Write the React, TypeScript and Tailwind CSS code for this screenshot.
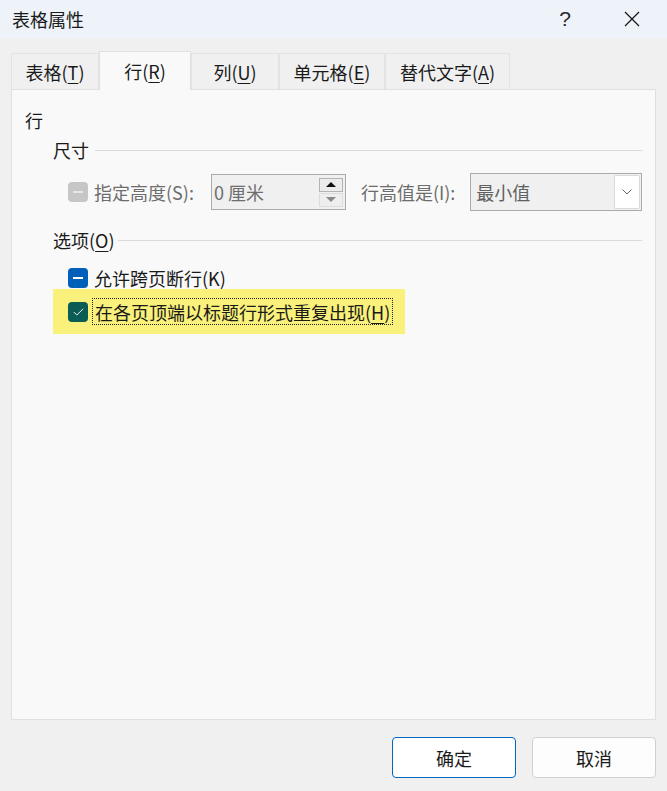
import React from 'react';

const Mn: React.FC<{ c: string }> = ({ c }) => (
  <span className="underline underline-offset-[3px] decoration-1">{c}</span>
);

const tabs = [
  { label: '表格', key: 'T', w: 'w-[88px]' },
  { label: '行', key: 'R', w: 'w-[92px]', active: true },
  { label: '列', key: 'U', w: 'w-[88px]' },
  { label: '单元格', key: 'E', w: 'w-[106px]' },
  { label: '替代文字', key: 'A', w: 'w-[125px]' },
];

const SectionTitle: React.FC<{ children: React.ReactNode; gap: string }> = ({ children, gap }) => (
  <div className={`flex items-center ${gap} pl-[41px] pr-[13px]`}>
    <span className="text-[#1a1a1a]">{children}</span>
    <div className="flex-1 h-px bg-[#dadada]" />
  </div>
);

export default function App() {
  return (
    <div className="w-[667px] h-[791px] bg-[#f0f0f0] flex flex-col text-[18px] leading-[24px] text-[#1a1a1a] font-['Noto_Sans_CJK_SC',sans-serif] overflow-hidden">
      {/* Title bar */}
      <div className="h-[38px] bg-[#eef3f9] flex items-center pl-[12px] shrink-0">
        <span className="text-[#1a1a1a]">表格属性</span>
        <div className="ml-auto flex items-center">
          <span className="text-[21px] text-[#2a2a2a] font-['Liberation_Sans',sans-serif] mr-[53px]">?</span>
          <svg width="16" height="16" viewBox="0 0 16 16" className="mr-[27px]">
            <path d="M1 1L15 15M15 1L1 15" stroke="#1a1a1a" strokeWidth="1.3" />
          </svg>
        </div>
      </div>

      {/* Tabs */}
      <div className="flex items-end pl-[11px] pt-[13px] shrink-0 relative z-10">
        {tabs.map((t) =>
          t.active ? (
            <div
              key={t.key}
              className={`${t.w} h-[39px] -mb-px bg-[#f9f9f9] border border-b-0 border-[#e0e0e0] flex items-center justify-center`}
            >
              {t.label}(<Mn c={t.key} />)
            </div>
          ) : (
            <div
              key={t.key}
              className={`${t.w} h-[36px] bg-[#f0f0f0] border border-b-0 border-[#e3e3e3] flex items-center justify-center`}
            >
              {t.label}(<Mn c={t.key} />)
            </div>
          )
        )}
      </div>

      {/* Panel */}
      <div className="mx-[11px] flex-1 bg-[#f9f9f9] border border-[#e0e0e0] flex flex-col">
        <div className="pl-[13px] pt-[18px]">行</div>

        <div className="mt-[6px]">
          <SectionTitle gap="gap-[6px]">尺寸</SectionTitle>
        </div>

        <div className="mt-[11px] flex items-center h-[38px] pl-[56px]">
          <div className="w-[20px] h-[20px] rounded-[4px] bg-[#c6c6c6] flex items-center justify-center">
            <div className="w-[10px] h-[2px] bg-[#e6e6e6]" />
          </div>
          <span className="ml-[6px] text-[#6d6d6d]">指定高度(S):</span>
          <div className="ml-[17px] w-[135px] h-[36px] bg-[#f0f0f0] border border-[#ababab] flex items-center pl-[2px] pr-[2px]">
            <span className="text-[#6d6d6d] flex-1">0 厘米</span>
            <div className="flex flex-col w-[24px] gap-px">
              <div className="h-[14px] bg-[#ececec] border border-[#b4b4b4] flex items-center justify-center">
                <svg width="10" height="5" viewBox="0 0 10 5"><path d="M0 5L5 0L10 5Z" fill="#111" /></svg>
              </div>
              <div className="h-[14px] bg-[#eeeeee] border border-[#dcdcdc] flex items-center justify-center">
                <svg width="10" height="5" viewBox="0 0 10 5"><path d="M0 0L10 0L5 5Z" fill="#8a8a8a" /></svg>
              </div>
            </div>
          </div>
          <span className="ml-[15px] text-[#6d6d6d]">行高值是(I):</span>
          <div className="ml-[15px] w-[172px] h-[38px] bg-[#f0f0f0] border border-[#ababab] flex items-center pl-[5px] pr-[1px]">
            <span className="text-[#606060] flex-1">最小值</span>
            <div className="w-[26px] h-[34px] bg-white border border-[#dadada] rounded-[2px] flex items-center justify-center">
              <svg width="10" height="6" viewBox="0 0 10 6"><path d="M0.5 0.5L5 5L9.5 0.5" stroke="#666" fill="none" strokeWidth="1" /></svg>
            </div>
          </div>
        </div>

        <div className="mt-[17px]">
          <SectionTitle gap="gap-[3px]">
            选项(<Mn c="O" />)
          </SectionTitle>
        </div>

        <div className="mt-[16px] flex items-center h-[20px] pl-[56px]">
          <div className="w-[20px] h-[20px] rounded-[4px] bg-[#005fb8] flex items-center justify-center">
            <div className="w-[10px] h-[2px] bg-white" />
          </div>
          <span className="ml-[6px]">
            允许跨页断行(<Mn c="K" />)
          </span>
        </div>

        <div className="mt-px ml-[41px] w-[352px] h-[45px] bg-[#f9f17b] flex items-center pl-[15px]">
          <div className="w-[20px] h-[20px] rounded-[4px] bg-[#0b5c54] flex items-center justify-center">
            <svg width="11" height="8" viewBox="0 0 11 8"><path d="M0.8 4L3.8 7L10.2 0.8" stroke="#e6efe9" fill="none" strokeWidth="1" /></svg>
          </div>
          <span className="ml-[4px] px-[2px] h-[27px] flex items-center border border-dotted border-[#222]">
            在各页顶端以标题行形式重复出现(<Mn c="H" />)
          </span>
        </div>
      </div>

      {/* Buttons */}
      <div className="h-[71px] shrink-0 flex items-start justify-end gap-[16px] pt-[17px] pr-[11px]">
        <button className="w-[124px] h-[41px] bg-white border border-[#0067c0] rounded-[4px] text-[#1a1a1a]">确定</button>
        <button className="w-[124px] h-[41px] bg-[#fdfdfd] border border-[#d0d0d0] rounded-[4px] text-[#1a1a1a]">取消</button>
      </div>
    </div>
  );
}
